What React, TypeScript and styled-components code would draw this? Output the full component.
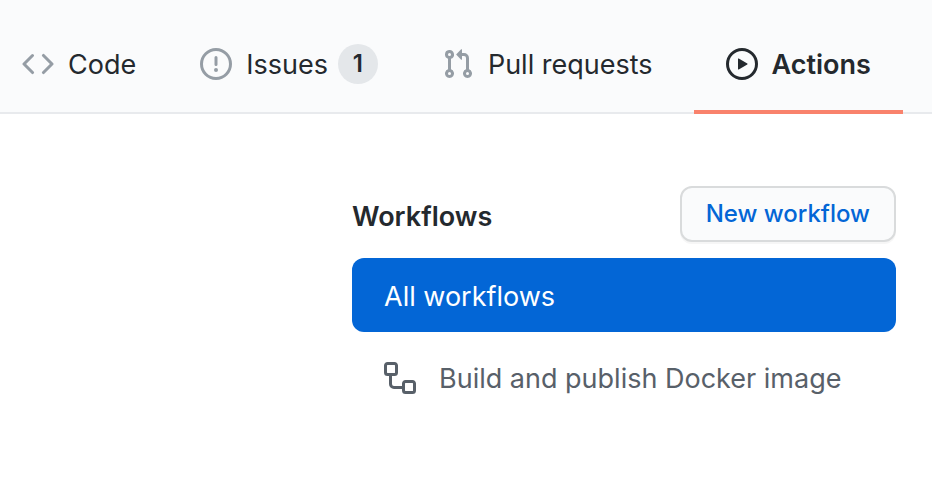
import React from "react";
import styled, { createGlobalStyle } from "styled-components";

const GlobalStyle = createGlobalStyle`
  *, *::before, *::after { box-sizing: border-box; }
  body {
    margin: 0;
    background: #ffffff;
    color: #24292e;
    font-family: Inter, "Liberation Sans", sans-serif;
    font-size: 27px;
    line-height: 42px;
  }
`;

const TabBar = styled.nav`
  display: flex;
  height: 114px;
  padding: 18px 28px 0 22px;
  background: #fafbfc;
  border-bottom: 2px solid #e8eaed;
  white-space: nowrap;
`;

const Tab = styled.a<{ $active?: boolean }>`
  display: flex;
  align-items: center;
  gap: 14px;
  margin-bottom: -2px;
  margin-left: ${(p) => (p.$active ? "9px" : "0")};
  padding: 0 32px;
  border-bottom: 4px solid ${(p) => (p.$active ? "#f9826c" : "transparent")};
  color: #24292e;
  font-weight: ${(p) => (p.$active ? 600 : 400)};
  text-decoration: none;

  &:first-child { padding-left: 0; }
  svg { color: ${(p) => (p.$active ? "#24292e" : "#959da5")}; }
`;

const TabText = styled.span`
  display: flex;
  align-items: center;
  gap: 10px;
`;

const Label = styled.span`
  padding-top: 2px;
`;

const Counter = styled.span`
  min-width: 40px;
  height: 40px;
  border-radius: 20px;
  background: #e4e7ea;
  font-size: 24px;
  font-weight: 600;
  line-height: 40px;
  text-align: center;
`;

const Glyph = styled.svg`
  flex: none;
  width: 32px;
  height: 32px;
  fill: currentColor;
`;

const Sidebar = styled.main`
  padding: 72px 36px 0 352px;
  white-space: nowrap;
`;

const SidebarHeader = styled.header`
  display: flex;
  align-items: center;
  justify-content: space-between;
  margin-bottom: 16px;
`;

const Title = styled.h1`
  margin: 0;
  padding-top: 6px;
  font-size: 27px;
  font-weight: 600;
`;

const NewButton = styled.button`
  height: 56px;
  padding: 0 24px;
  border: 2px solid #d9dbdc;
  border-radius: 12px;
  background: #fafbfc;
  box-shadow: 0 2px 0 rgba(27, 31, 35, 0.04);
  color: #0366d6;
  font: 500 24px/40px Inter, "Liberation Sans", sans-serif;
  cursor: pointer;
`;

const WorkflowList = styled.ul`
  display: grid;
  gap: 8px;
  margin: 0;
  padding: 0;
  list-style: none;
`;

const WorkflowLink = styled.a<{ $selected?: boolean }>`
  display: flex;
  align-items: center;
  gap: 23px;
  padding: 16px 32px 14px;
  border-radius: 12px;
  background: ${(p) => (p.$selected ? "#0366d6" : "transparent")};
  color: ${(p) => (p.$selected ? "#ffffff" : "#586069")};
  text-decoration: none;
`;

const paths = {
  code: "M4.72 3.22a.75.75 0 011.06 1.06L2.06 8l3.72 3.72a.75.75 0 11-1.06 1.06L.47 8.53a.75.75 0 010-1.06l4.25-4.25zm6.56 0a.75.75 0 10-1.06 1.06L13.94 8l-3.72 3.72a.75.75 0 101.06 1.06l4.25-4.25a.75.75 0 000-1.06l-4.25-4.25z",
  issue: "M8 1.5a6.5 6.5 0 100 13 6.5 6.5 0 000-13zM0 8a8 8 0 1116 0A8 8 0 010 8zm9 3a1 1 0 11-2 0 1 1 0 012 0zm-.25-6.25a.75.75 0 00-1.5 0v3.5a.75.75 0 001.5 0v-3.5z",
  pull: "M7.177 3.073L9.573.677A.25.25 0 0110 .854v4.792a.25.25 0 01-.427.177L7.177 3.427a.25.25 0 010-.354zM3.75 2.5a.75.75 0 100 1.5.75.75 0 000-1.5zm-2.25.75a2.25 2.25 0 113 2.122v5.256a2.251 2.251 0 11-1.5 0V5.372A2.25 2.25 0 011.5 3.25zM11 2.5h-1V4h1a1 1 0 011 1v5.628a2.251 2.251 0 101.5 0V5A2.5 2.5 0 0011 2.5zm1 10.25a.75.75 0 111.5 0 .75.75 0 01-1.5 0zM3.75 12a.75.75 0 100 1.5.75.75 0 000-1.5z",
  play: "M1.5 8a6.5 6.5 0 1113 0 6.5 6.5 0 01-13 0zM8 0a8 8 0 100 16A8 8 0 008 0zM6.379 5.227A.25.25 0 006 5.442v5.117a.25.25 0 00.379.214l4.264-2.559a.25.25 0 000-.428L6.379 5.227z",
  workflow: "M0 1.75C0 .784.784 0 1.75 0h3.5C6.216 0 7 .784 7 1.75v3.5A1.75 1.75 0 015.25 7H4v4a1 1 0 001 1h4v-1.25C9 9.784 9.784 9 10.75 9h3.5c.966 0 1.75.784 1.75 1.75v3.5A1.75 1.75 0 0114.25 16h-3.5A1.75 1.75 0 019 14.25v-.75H5A2.5 2.5 0 012.5 11V7h-.75A1.75 1.75 0 010 5.25v-3.5zm1.75-.25a.25.25 0 00-.25.25v3.5c0 .138.112.25.25.25h3.5a.25.25 0 00.25-.25v-3.5a.25.25 0 00-.25-.25h-3.5zm9 9a.25.25 0 00-.25.25v3.5c0 .138.112.25.25.25h3.5a.25.25 0 00.25-.25v-3.5a.25.25 0 00-.25-.25h-3.5z",
};

type IconName = keyof typeof paths;

function Icon({ name }: { name: IconName }) {
  return (
    <Glyph viewBox="0 0 16 16" aria-hidden="true">
      <path fillRule="evenodd" d={paths[name]} />
    </Glyph>
  );
}

const tabs: { label: string; icon: IconName; count?: number; active?: boolean }[] = [
  { label: "Code", icon: "code" },
  { label: "Issues", icon: "issue", count: 1 },
  { label: "Pull requests", icon: "pull" },
  { label: "Actions", icon: "play", active: true },
];

export default function App() {
  return (
    <>
      <GlobalStyle />
      <TabBar aria-label="Repository">
        {tabs.map((tab) => (
          <Tab key={tab.label} href="#" $active={tab.active} aria-current={tab.active ? "page" : undefined}>
            <Icon name={tab.icon} />
            <TabText>
              <Label>{tab.label}</Label>
              {tab.count !== undefined && <Counter>{tab.count}</Counter>}
            </TabText>
          </Tab>
        ))}
      </TabBar>
      <Sidebar>
        <SidebarHeader>
          <Title>Workflows</Title>
          <NewButton type="button">New workflow</NewButton>
        </SidebarHeader>
        <WorkflowList>
          <li>
            <WorkflowLink href="#" $selected aria-current="page">
              <Label>All workflows</Label>
            </WorkflowLink>
          </li>
          <li>
            <WorkflowLink href="#">
              <Icon name="workflow" />
              <Label>Build and publish Docker image</Label>
            </WorkflowLink>
          </li>
        </WorkflowList>
      </Sidebar>
    </>
  );
}
